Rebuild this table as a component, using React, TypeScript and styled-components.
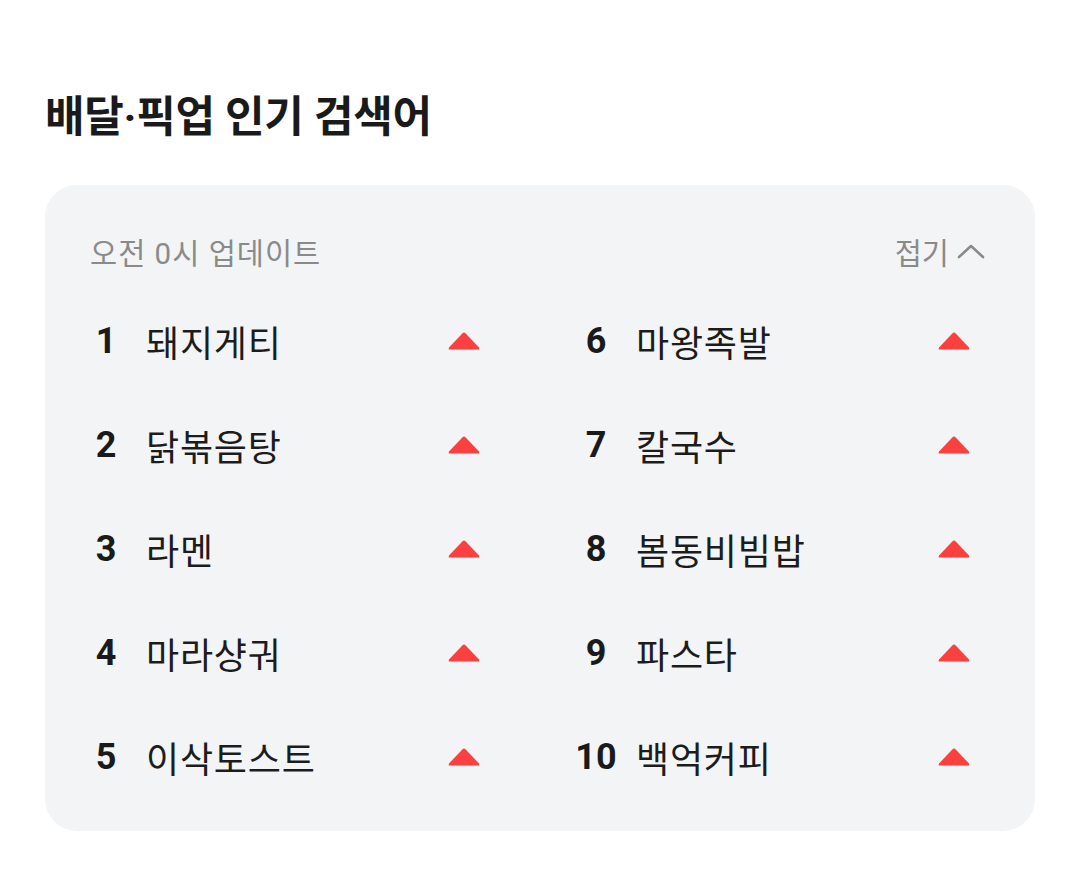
import React from 'react';
import styled, { createGlobalStyle } from 'styled-components';

const GlobalStyle = createGlobalStyle`
  html, body {
    margin: 0;
    padding: 0;
    background: #ffffff;
  }
  body {
    font-family: Roboto, "Noto Sans CJK KR", sans-serif;
    color: #1c1c1c;
  }
`;

const Page = styled.div`
  padding: 92px 45px 0 45px;
  width: 990px;
`;

const Title = styled.h1`
  margin: 0 0 43px 0;
  font-size: 43px;
  line-height: 50px;
  font-weight: 700;
  color: #1a1a1a;
  letter-spacing: -0.3px;
`;

const Card = styled.section`
  background: #f3f4f6;
  border-radius: 32px;
  padding: 47px 50px 22px 45px;
`;

const Header = styled.div`
  display: flex;
  justify-content: space-between;
  align-items: center;
  height: 38px;
  margin-bottom: 19px;
`;

const Updated = styled.span`
  font-size: 29.5px;
  letter-spacing: 1px;
  color: #8a8a8a;
`;

const Fold = styled.button`
  display: flex;
  align-items: center;
  gap: 8px;
  border: none;
  background: none;
  padding: 0;
  font-family: inherit;
  font-size: 29.5px;
  color: #8a8a8a;
  cursor: pointer;
`;

const Grid = styled.ol`
  list-style: none;
  margin: 0;
  padding: 0;
  display: grid;
  grid-template-columns: 405px 405px;
  column-gap: 85px;
  grid-auto-flow: column;
  grid-template-rows: repeat(5, 104px);
`;

const Row = styled.li`
  display: flex;
  align-items: center;
`;

const Rank = styled.span`
  width: 32px;
  font-size: 36px;
  font-weight: 700;
  color: #1a1a1a;
  margin-right: 24px;
  white-space: nowrap;
  display: flex;
  justify-content: center;
`;

const Keyword = styled.span`
  flex: 1;
  font-size: 36px;
  letter-spacing: 0.8px;
  color: #1c1c1c;
`;

const Trend = styled.span`
  display: flex;
  margin-right: 15px;
`;

const items = [
  '돼지게티',
  '닭볶음탕',
  '라멘',
  '마라샹궈',
  '이삭토스트',
  '마왕족발',
  '칼국수',
  '봄동비빔밥',
  '파스타',
  '백억커피',
];

const UpIcon = () => (
  <svg width="32" height="18" viewBox="0 0 32 18">
    <path
      d="M14.3 1.4 Q16 -0.4 17.7 1.4 L31 15.6 Q32 17.5 30 17.5 L2 17.5 Q0 17.5 1 15.6 Z"
      fill="#fc3f3f"
    />
  </svg>
);

const Chevron = () => (
  <svg width="28" height="16" viewBox="0 0 28 16">
    <path d="M2 14 L14 3 L26 14" fill="none" stroke="#8a8a8a" strokeWidth="2.6" strokeLinecap="round" strokeLinejoin="round" />
  </svg>
);

const App: React.FC = () => {
  return (
    <>
      <GlobalStyle />
      <Page>
        <Title>배달·픽업 인기 검색어</Title>
        <Card>
          <Header>
            <Updated>오전 0시 업데이트</Updated>
            <Fold>
              접기
              <Chevron />
            </Fold>
          </Header>
          <Grid>
            {items.map((name, i) => (
              <Row key={name}>
                <Rank>{i + 1}</Rank>
                <Keyword>{name}</Keyword>
                <Trend>
                  <UpIcon />
                </Trend>
              </Row>
            ))}
          </Grid>
        </Card>
      </Page>
    </>
  );
};

export default App;
